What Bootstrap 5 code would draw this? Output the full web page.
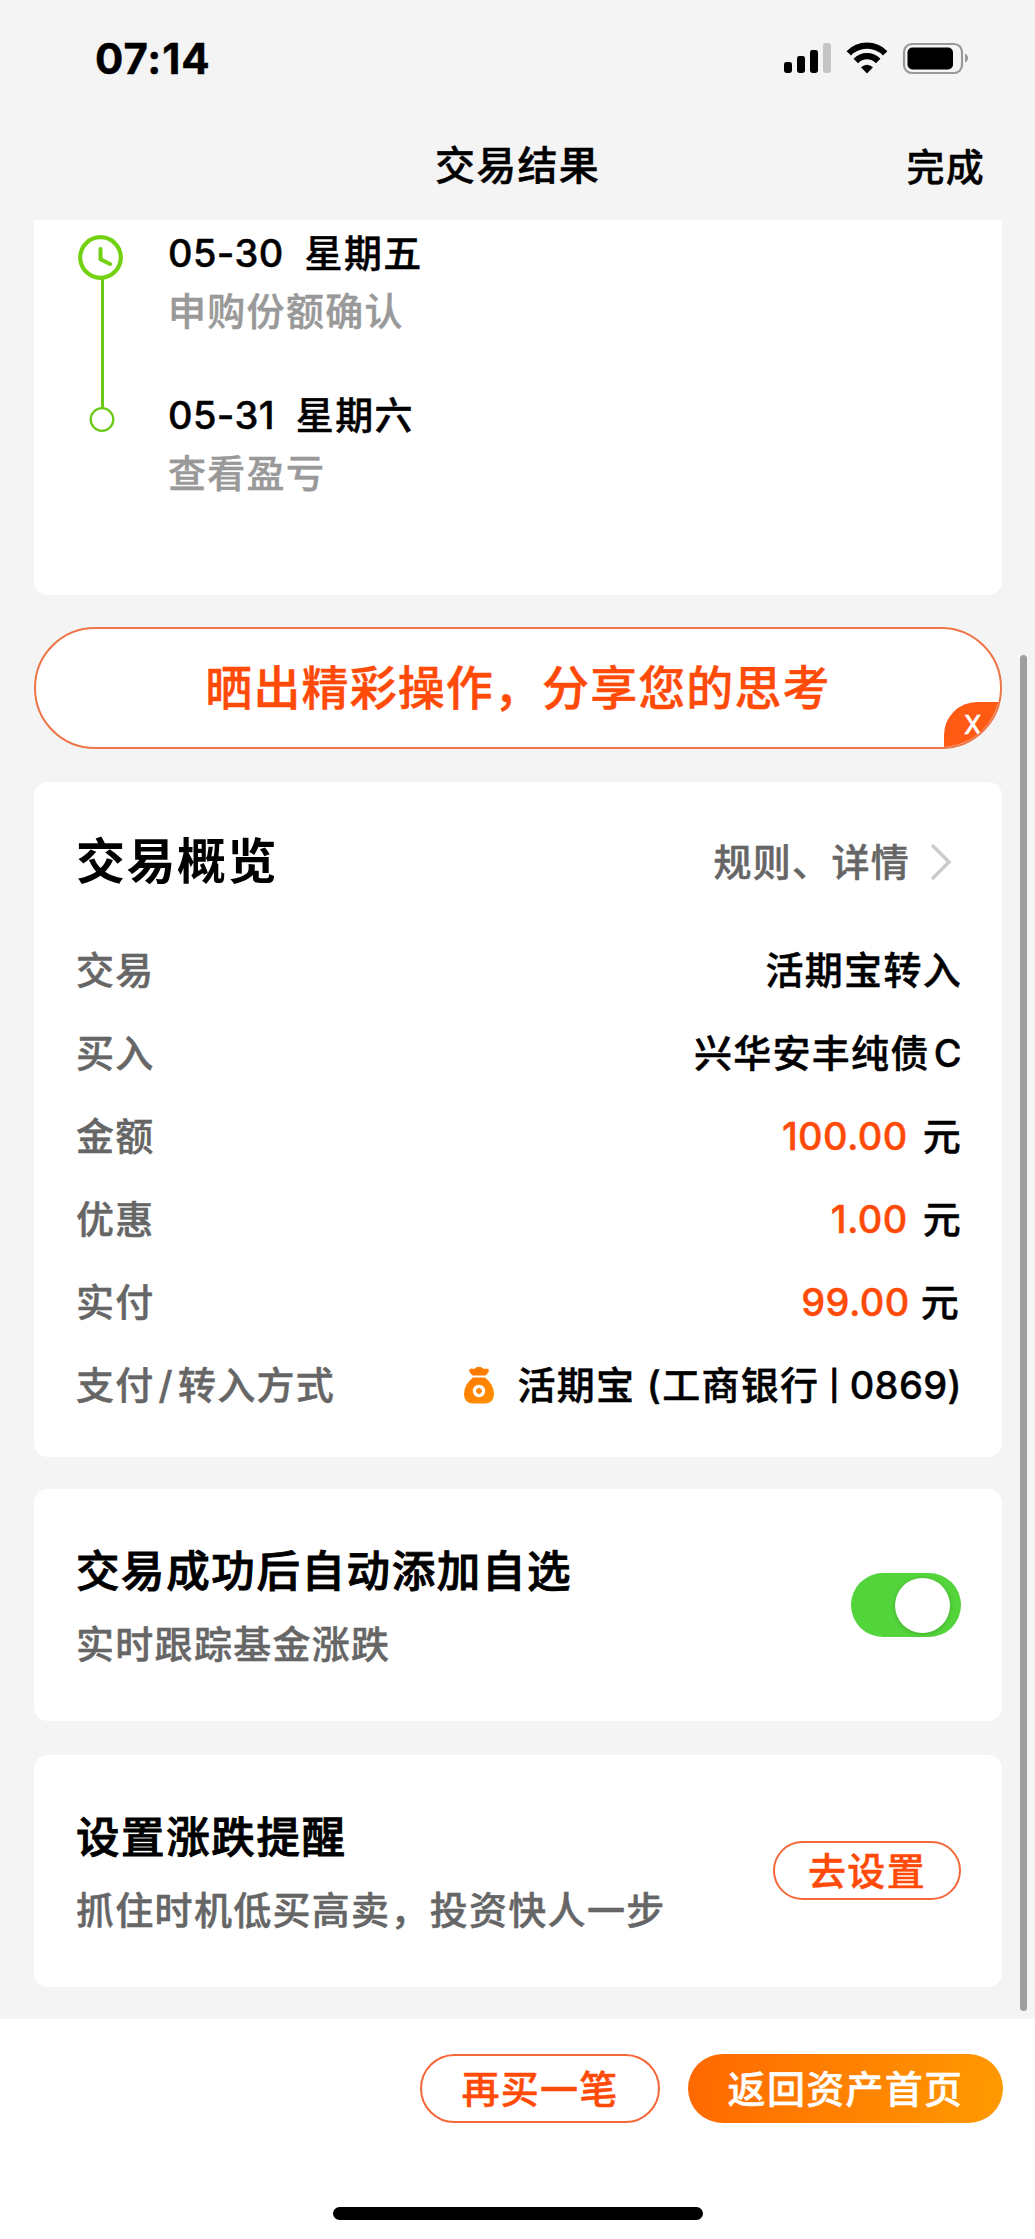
<!DOCTYPE html>
<html lang="zh-CN">
<head>
<meta charset="utf-8">
<meta name="viewport" content="width=device-width, initial-scale=1">
<title>交易结果</title>
<link rel="stylesheet" href="https://cdn.jsdelivr.net/npm/bootstrap@5.3.0/dist/css/bootstrap.min.css">
<style>
body{font-family:Inter,"Noto Sans CJK SC",sans-serif;background:#f4f4f4;color:#000;width:1035px;height:2239px;overflow:hidden;font-size:38px;font-weight:500;letter-spacing:1.3px;line-height:50px;-webkit-text-stroke:.45px currentColor}
.status-bar{height:116px;padding:29px 66px 0 95px}
.clock-text{font-size:42px;font-weight:700;letter-spacing:.9px;line-height:60px}
.status-icons{margin-top:12px}
.title-bar{height:104px;padding:25px 50px 0}
.page-title{font-size:40px}
.side{flex:1 1 0}
.done{padding-top:1px}
.sheet{margin:0 33px 0 34px;border-radius:14px;background:#fff}
.steps{height:375px;border-radius:0 0 14px 14px;padding:8px 42px;margin-bottom:32px}
.step-list{padding-left:40px}
.num{letter-spacing:.4px}
.day{margin-left:21px}
.next-step{margin-top:54px}
.c-muted{color:#999}
.c-label{color:#666}
.c-hot{color:#ff4a08;letter-spacing:.4px}
.share{height:122px;border:2px solid #ee7547;border-radius:61px;color:#ff4a08;font-size:47px;letter-spacing:1.1px;margin-bottom:33px;overflow:hidden}
.share-close{right:-2px;bottom:-2px;width:58px;height:47px;border-radius:33px 0 0 0;background:#ff5a14;font-size:25px;letter-spacing:0;line-height:47px;padding-left:20px}
.overview{height:675px;padding:55px 40px 0 42px;margin-bottom:32px}
.head-line{height:50px;margin-bottom:58px}
.h-big{font-size:49px;font-weight:700;-webkit-text-stroke:0;letter-spacing:1.5px}
.chev{margin:0 10px 0 20px}
.bag-icon{margin:6px 24px 0 0}
.unit{margin-left:15px}
.unit-near{margin-left:11px;margin-right:2px}
.bar-sep{font-size:29px;margin:0 9px 0 10px;vertical-align:3px;line-height:1;-webkit-text-stroke:1px currentColor}
.line-item{height:83px}
.option{height:232px;padding:0 41px 0 42px;margin-bottom:33.5px}
.h-mid{font-size:43.5px;line-height:60px;margin-bottom:18px;letter-spacing:1.6px;-webkit-text-stroke:.9px currentColor}
.toggle{width:110px;height:64px;border-radius:32px;background:#53d43b;padding:0 11px 0 0}
.knob{width:55px;height:55px;border-radius:50%;background:#fff;box-shadow:0 1px 4px rgba(0,0,0,.2)}
.line-btn{border:2px solid #f4683a;color:#ff4a08;border-radius:40px;font:inherit;letter-spacing:inherit;line-height:1;background:#fff}
.footer-bar{height:220px;padding:35px 32px 0 0;background:#fff;margin-top:-1px}
.btn-go{width:188px;height:59px}
.btn-again{width:240px;height:69px;margin-right:28px}
.btn-home{width:315px;height:69px;border-radius:35px;background:linear-gradient(100deg,#ff6800,#ff9a00);color:#fff}
.scroll-thumb{left:1020px;top:655px;width:7px;height:1356px;border-radius:4px;background:#9f9f9f}
.home-bar{left:333px;top:2207px;width:370px;height:13px;border-radius:7px;background:#000}
</style>
</head>
<body class="position-relative">
<header>
  <div class="status-bar d-flex justify-content-between align-items-start">
    <span class="clock-text">07:14</span>
    <svg class="status-icons" width="190" height="34" viewBox="0 0 190 34">
      <rect x="5" y="21" width="8" height="11" rx="2.4"/><rect x="18" y="15" width="8" height="17" rx="2.4"/><rect x="31" y="9" width="8" height="23" rx="2.4"/><rect x="44" y="2" width="8" height="30" rx="2.4" fill="#c5c5c5"/>
      <g fill="none" stroke="#000"><path d="M69.800 12.300a25.500 25.500 0 0 1 36.400 0" stroke-width="6.200"/><path d="M76.800 20a15.500 15.500 0 0 1 22.400 0" stroke-width="6.200"/></g>
      <path d="M82 26.300q6-5.200 12 0L88 32.600z"/>
      <rect x="125" y="3" width="58" height="29" rx="8" fill="none" stroke="#999" stroke-width="2.200"/><rect x="128.500" y="6.500" width="45.500" height="22" rx="5"/><path d="M186 12.500v9q3-1.500 3-4.500t-3-4.500z" fill="#999"/>
    </svg>
  </div>
  <div class="title-bar d-flex align-items-start">
    <div class="side"></div>
    <div class="page-title">交易结果</div>
    <div class="side done text-end">完成</div>
  </div>
</header>
<main>
  <section class="sheet steps d-flex">
    <svg width="52" height="210" viewBox="0 0 52 210" class="flex-shrink-0">
      <path d="M26.500 50v131" stroke="#6aca17" stroke-width="3"/>
      <circle cx="24.500" cy="29.500" r="20.300" fill="#fff" stroke="#72d212" stroke-width="4.200"/>
      <path d="M24.500 21v10.200l9.500 4.800" fill="none" stroke="#72d212" stroke-width="4" stroke-linecap="round" stroke-linejoin="round"/>
      <circle cx="26" cy="191.500" r="11.300" fill="#fff" stroke="#6aca17" stroke-width="2.300"/>
    </svg>
    <div class="step-list">
      <div><span class="num">05-30</span><span class="day">星期五</span></div>
      <div class="c-muted mt-2">申购份额确认</div>
      <div class="next-step"><span class="num">05-31</span><span class="day">星期六</span></div>
      <div class="c-muted mt-2">查看盈亏</div>
    </div>
  </section>
  <div class="sheet share position-relative d-flex align-items-center justify-content-center">晒出精彩操作，分享您的思考
    <div class="share-close position-absolute text-white">X</div>
  </div>
  <section class="sheet overview">
    <div class="head-line d-flex align-items-center">
      <div class="h-big me-auto">交易概览</div>
      <span class="c-label">规则、详情</span>
      <svg class="chev" width="22" height="38" viewBox="0 0 22 38" fill="none" stroke="#ccc" stroke-width="3.500"><path d="M2 2l17 17L2 36"/></svg>
    </div>
    <div class="line-item d-flex justify-content-between"><span class="c-label">交易</span><span>活期宝转入</span></div>
    <div class="line-item d-flex justify-content-between"><span class="c-label">买入</span><span>兴华安丰纯债<span class="num ms-1">C</span></span></div>
    <div class="line-item d-flex justify-content-between"><span class="c-label">金额</span><span><span class="c-hot">100.00</span><span class="unit">元</span></span></div>
    <div class="line-item d-flex justify-content-between"><span class="c-label">优惠</span><span><span class="c-hot">1.00</span><span class="unit">元</span></span></div>
    <div class="line-item d-flex justify-content-between"><span class="c-label">实付</span><span><span class="c-hot num">99.00</span><span class="unit-near">元</span></span></div>
    <div class="line-item d-flex"><span class="c-label me-auto">支付<span class="mx-1">/</span>转入方式</span>
      <svg class="bag-icon" width="30" height="38" viewBox="0 0 30 38">
        <defs><linearGradient id="bag" x1="0" y1="0" x2="1" y2="1"><stop offset="0" stop-color="#ff7a00"/><stop offset="1" stop-color="#ff9100"/></linearGradient></defs>
        <path d="M8.500 9.500Q4 5 5.500 3.500 7 2 10 3 15-1.500 20 3q3-1 4.500.5 1.500 1.500-3 6z" fill="#ff7b00"/>
        <path d="M9 11.500h12q9 7 9 16.500 0 9.500-9.500 9.500h-11Q0 37.500 0 28q0-9.500 9-16.500z" fill="url(#bag)"/>
        <circle cx="15" cy="25" r="6.200" fill="#fff"/><path d="M15 22v6M12 25h6" stroke="#ff8500" stroke-width="3"/>
      </svg>
      <span>活期宝 (工商银行<span class="bar-sep">|</span><span class="num">0869)</span></span></div>
  </section>
  <section class="sheet option d-flex align-items-center justify-content-between">
    <div><div class="h-mid">交易成功后自动添加自选</div><div class="c-label">实时跟踪基金涨跌</div></div>
    <div class="toggle d-flex align-items-center justify-content-end"><span class="knob"></span></div>
  </section>
  <section class="sheet option d-flex align-items-center justify-content-between">
    <div><div class="h-mid">设置涨跌提醒</div><div class="c-label">抓住时机低买高卖，投资快人一步</div></div>
    <button type="button" class="line-btn btn-go p-0">去设置</button>
  </section>
</main>
<footer class="footer-bar d-flex justify-content-end align-items-start">
  <button type="button" class="line-btn btn-again p-0">再买一笔</button>
  <div class="btn-home d-flex align-items-center justify-content-center">返回资产首页</div>
</footer>
<div class="scroll-thumb position-absolute"></div>
<div class="home-bar position-absolute"></div>
<script src="https://cdn.jsdelivr.net/npm/bootstrap@5.3.0/dist/js/bootstrap.bundle.min.js"></script>
</body>
</html>
